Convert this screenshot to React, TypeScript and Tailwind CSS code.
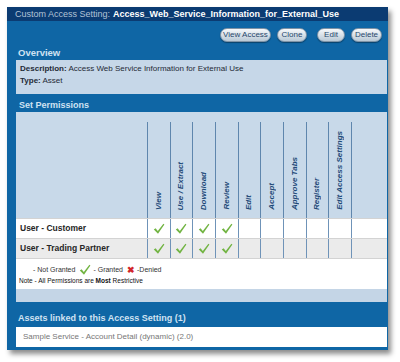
import React from "react";

const columns = [
  "View",
  "Use / Extract",
  "Download",
  "Review",
  "Edit",
  "Accept",
  "Approve Tabs",
  "Register",
  "Edit Access Settings",
];

const rows = [
  { name: "User - Customer", granted: 4, bg: "bg-white" },
  { name: "User - Trading Partner", granted: 4, bg: "bg-[#ebebeb]" },
];

const gridCols = "grid-cols-[131px_repeat(9,22.67px)_1fr]";

function Check({ className = "" }: { className?: string }) {
  return (
    <svg viewBox="0 0 12 12" className={className}>
      <path d="M0.8 6.4 L2.6 5.3 L4.8 8 L10.4 0.8 L11.4 1.6 L5 10.8 Z" fill="#72b443" />
    </svg>
  );
}

function PanelButton({ label, w, ml }: { label: string; w: string; ml: string }) {
  return (
    <button
      type="button"
      className={`h-[14px] ${w} ${ml} rounded-full border border-[#7f93a6] bg-gradient-to-b from-[#f7f9fb] to-[#b9c9d6] text-[8px] leading-none text-[#27476b] shadow-[0_1px_1px_rgba(0,0,0,0.35)]`}
    >
      {label}
    </button>
  );
}

export default function App() {
  return (
    <div className="h-[362px] w-[400px] bg-white pl-[7px] pt-[7px] font-['Liberation_Sans',Arial,sans-serif]">
      <div className="w-[381px] bg-[#0f66a5] shadow-[3px_4px_5px_rgba(0,0,0,0.45)]">
        <div className="flex h-[14px] items-center bg-[#0b3b72] pl-[8px] text-[9px] leading-none">
          <span className="text-[#b3c3d6]">Custom Access Setting:</span>
          <span className="ml-[3px] font-bold text-white">Access_Web_Service_Information_for_External_Use</span>
        </div>

        <div className="pb-[3px] pl-[9px] pr-[1px]">
          <div className="flex justify-end pr-[5px] pt-[7px]">
            <PanelButton label="View Access" w="w-[51px]" ml="ml-0" />
            <PanelButton label="Clone" w="w-[30px]" ml="ml-[6px]" />
            <PanelButton label="Edit" w="w-[28px]" ml="ml-[10px]" />
            <PanelButton label="Delete" w="w-[31px]" ml="ml-[6px]" />
          </div>

          <div className="h-[18px] pl-[2px] pt-[5px] text-[9.5px] font-bold leading-[12px] text-[#cfe2f2]">Overview</div>
          <div className="bg-[#c6d7e8] pb-[7px] pl-[4px] pt-[3px] text-[8px] leading-[12px] text-[#1f2a36]">
            <div>
              <span className="font-bold">Description:</span> Access Web Service Information for External Use
            </div>
            <div>
              <span className="font-bold">Type:</span> Asset
            </div>
          </div>

          <div className="h-[18px] pl-[3px] pt-[5px] text-[9px] font-bold leading-[12px] text-[#cfe2f2]">Set Permissions</div>

          <div className={`grid h-[106px] ${gridCols} bg-[#c8d9e9] pt-[10px]`}>
            <div />
            {columns.map((c) => (
              <div key={c} className="flex items-end justify-center border-l border-[#5f86ad] pb-[8px]">
                <span className="rotate-180 text-[8px] font-bold italic leading-none text-[#1f4a78] [writing-mode:vertical-rl]">
                  {c}
                </span>
              </div>
            ))}
            <div className="border-l border-[#5f86ad]" />
          </div>

          {rows.map((r) => (
            <div key={r.name} className={`grid h-[20px] ${gridCols} ${r.bg} border-t border-[#d3d3d3]`}>
              <div className="flex items-center pl-[4px] text-[8.5px] font-bold text-[#262626]">{r.name}</div>
              {columns.map((c, i) => (
                <div key={c} className="flex items-center justify-center border-l border-[#6f93b8]">
                  {i < r.granted && <Check className="h-[12px] w-[12px]" />}
                </div>
              ))}
              <div className="border-l border-[#6f93b8]" />
            </div>
          ))}

          <div className="h-[31px] border-t border-[#d3d3d3] bg-white pl-[3px] pt-[5px] text-[6.5px] leading-[10px] text-[#333]">
            <div className="flex items-center pl-[14px]">
              <span className="text-[7px]">- Not Granted</span>
              <Check className="ml-[4px] h-[12px] w-[12px]" />
              <span className="ml-[2px] text-[7px]">- Granted</span>
              <span className="ml-[4px] text-[9px] font-bold leading-none text-[#d2262a]">✖</span>
              <span className="ml-[2px] text-[7px]">-Denied</span>
            </div>
            <div className="text-[#111]">
              Note - All Permissions are <span className="font-bold">Most</span> Restrictive
            </div>
          </div>

          <div className="h-[13px] bg-[#c4d5e6]" />

          <div className="h-[25px] pl-[2px] pt-[10px] text-[9px] font-bold leading-[12px] text-[#cfe2f2]">
            Assets linked to this Access Setting (1)
          </div>
          <div className="flex h-[20px] items-center bg-white pl-[7px] text-[8px] text-[#777]">
            Sample Service - Account Detail (dynamic) (2.0)
          </div>
        </div>
      </div>
    </div>
  );
}
